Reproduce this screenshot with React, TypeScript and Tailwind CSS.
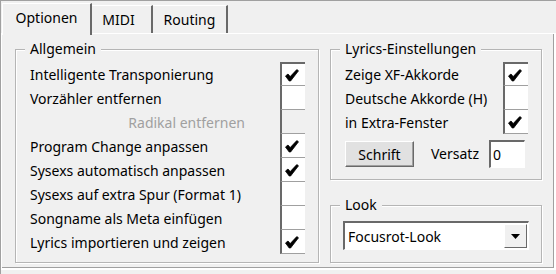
import React from "react";

const Check = () => (
  <svg width="14" height="13" viewBox="0 0 14 13" className="block">
    <path d="M0.5 7 L3 5 L5.2 7.6 L11.8 0.6 L13.5 1.8 L5.6 12 L4.2 12 Z" fill="#000" stroke="#000" strokeWidth="0.8" strokeLinejoin="round" />
  </svg>
);

function Cell({ checked, disabled, first }: { checked?: boolean; disabled?: boolean; first?: boolean }) {
  return (
    <div
      className={
        "w-[25px] h-[24px] shrink-0 border-l-2 border-l-[#696969] border-b border-b-[#a0a0a0] flex items-center pl-[3px] pt-[1px] " +
        (first ? "border-t-2 border-t-[#696969] " : "") +
        (disabled ? "bg-[#f0f0f0]" : "bg-white")
      }
    >
      {checked ? <Check /> : null}
    </div>
  );
}

function Row({ label, checked, disabled, first }: { label: string; checked?: boolean; disabled?: boolean; first?: boolean }) {
  return (
    <div className="flex items-end">
      <div className={"flex-1 h-[24px] flex items-center " + (disabled ? "text-[#a0a0a0] justify-end pr-[35px] " : "text-black ")}>
        {label}
      </div>
      <Cell checked={checked} disabled={disabled} first={first} />
    </div>
  );
}

function Group({ title, className, children }: { title: string; className: string; children: React.ReactNode }) {
  return (
    <div className={"relative border border-[#b5b5b5] shadow-[inset_1px_1px_0_#fff,1px_1px_0_#fff] " + className}>
      <div className="absolute left-[9px] top-[-10px] px-[5px] bg-[#f0f0f0] leading-[18px]">{title}</div>
      {children}
    </div>
  );
}

export default function App() {
  const font = { fontFamily: '"Noto Sans", "DejaVu Sans", sans-serif' };
  return (
    <div className="w-[556px] h-[274px] bg-[#f0f0f0] border-t border-l border-[#a0a0a0] text-[14px] text-black overflow-hidden" style={font}>
      <div className="flex items-end h-[32px] pl-[1px]">
        <div className="relative z-10 w-[90px] h-[32px] mb-[-2px] bg-[#f0f0f0] border-t border-l border-white border-r-2 border-r-[#696969] flex items-center justify-center pb-[4px]">
          Optionen
        </div>
        <div className="w-[61px] h-[28px] border-t border-white border-r-2 border-r-[#696969] flex items-center justify-center pr-[6px]">
          MIDI
        </div>
        <div className="w-[75px] h-[28px] border-t border-white border-r-2 border-r-[#696969] flex items-center justify-center">
          Routing
        </div>
      </div>
      <div className="w-[555px] h-[237px] border-t border-l border-white border-r-2 border-b-2 border-[#696969] shadow-[inset_-1px_-1px_0_#a0a0a0] flex pl-[13px] pt-[15px] gap-[11px]">
        <Group title="Allgemein" className="w-[304px] h-[214px] pl-[14px] pr-[13px] pt-[12px]">
          <Row label="Intelligente Transponierung" checked first />
          <Row label="Vorzähler entfernen" />
          <Row label="Radikal entfernen" disabled />
          <Row label="Program Change anpassen" checked />
          <Row label="Sysexs automatisch anpassen" checked />
          <Row label="Sysexs auf extra Spur (Format 1)" />
          <Row label="Songname als Meta einfügen" />
          <Row label="Lyrics importieren und zeigen" checked />
        </Group>
        <div className="flex flex-col gap-[25px]">
          <Group title="Lyrics-Einstellungen" className="w-[212px] h-[131px] pl-[14px] pr-[13px] pt-[12px]">
            <Row label="Zeige XF-Akkorde" checked first />
            <Row label="Deutsche Akkorde (H)" />
            <Row label="in Extra-Fenster" checked />
            <div className="flex items-center mt-[6px]">
              <div className="w-[69px] h-[26px] bg-[#e1e1e1] border border-white border-r-[#696969] border-b-[#696969] shadow-[inset_-1px_-1px_0_#a0a0a0] flex items-center justify-center">
                Schrift
              </div>
              <div className="ml-[17px] pb-[2px]">Versatz</div>
              <div className="ml-[10px] w-[36px] h-[28px] bg-white border-t-2 border-l-2 border-[#696969] border-r border-b border-r-white border-b-white flex items-center pl-[2px]">
                0
              </div>
            </div>
          </Group>
          <Group title="Look" className="w-[212px] h-[58px] pl-[12px] pt-[15px]">
            <div className="w-[186px] h-[29px] bg-white border-t-2 border-l-2 border-[#696969] border-r border-b border-r-white border-b-white flex items-center">
              <div className="flex-1 pl-[3px]">Focusrot-Look</div>
              <div className="w-[23px] h-[24px] mr-[1px] bg-[#f0f0f0] border border-white border-r-[#696969] border-b-[#696969] flex items-center justify-center">
                <svg width="9" height="5" viewBox="0 0 9 5"><path d="M0 0 H9 L4.5 5 Z" fill="#000" /></svg>
              </div>
            </div>
          </Group>
        </div>
      </div>
    </div>
  );
}
